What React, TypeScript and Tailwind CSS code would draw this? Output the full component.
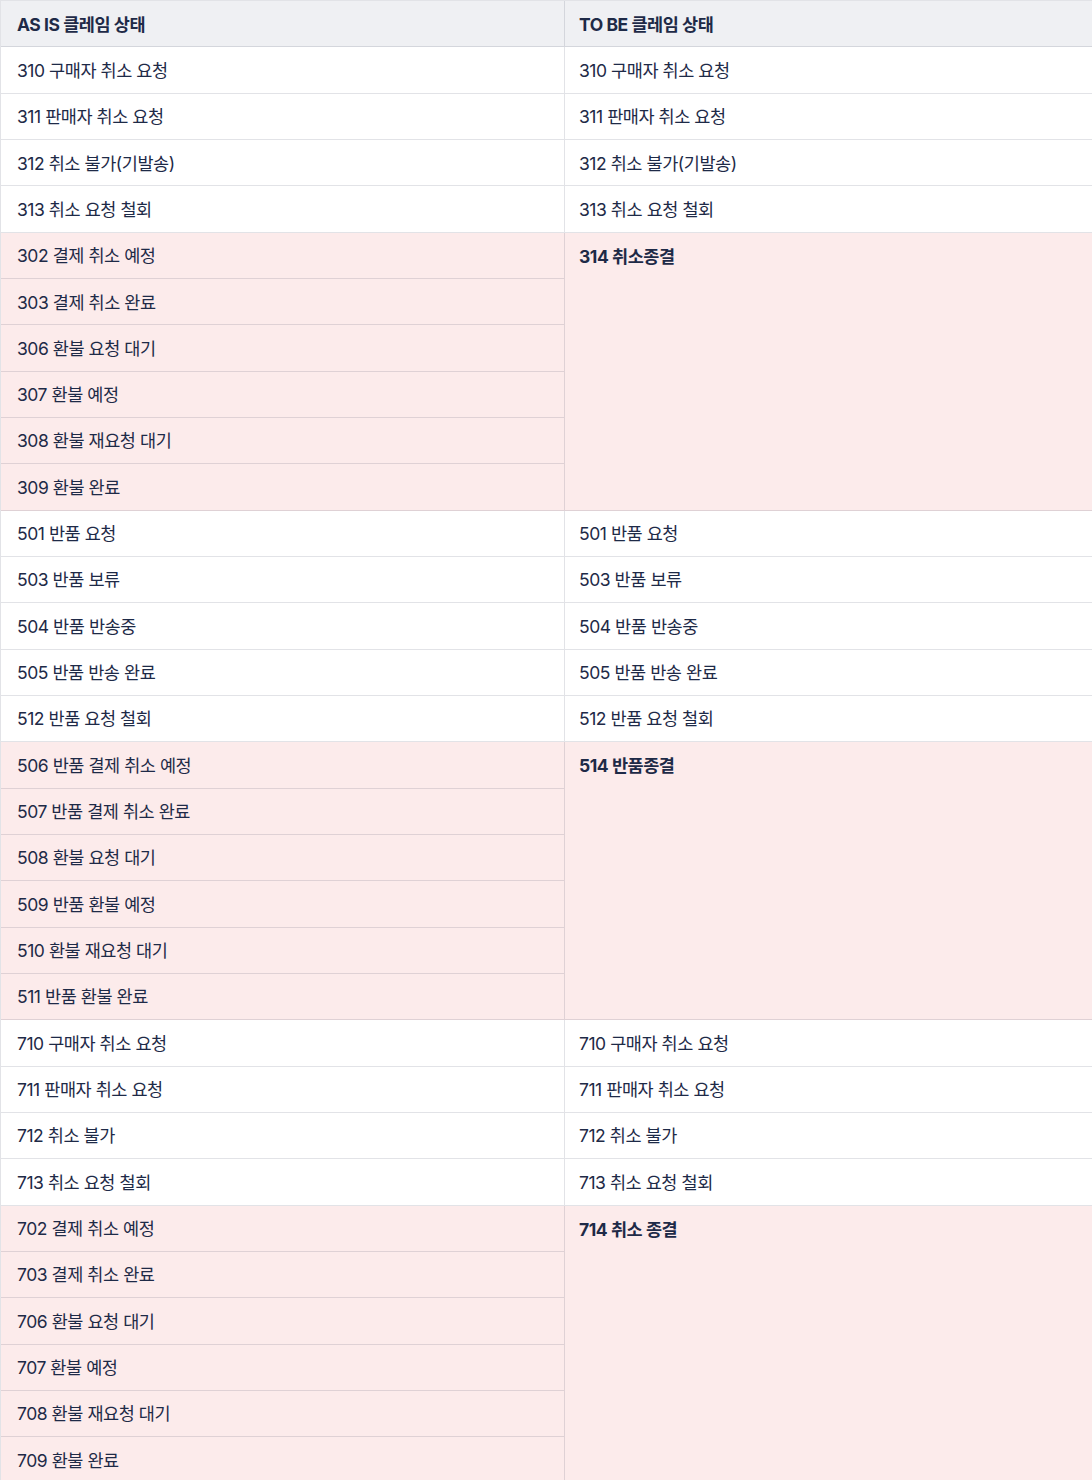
import React from 'react';

type Group = {
  asIs: string[];
  toBe: string[] | string;
};

// toBe as string = merged (closed) status, shown once across the group
const groups: Group[] = [
  {
    asIs: ['310 구매자 취소 요청', '311 판매자 취소 요청', '312 취소 불가(기발송)', '313 취소 요청 철회'],
    toBe: ['310 구매자 취소 요청', '311 판매자 취소 요청', '312 취소 불가(기발송)', '313 취소 요청 철회'],
  },
  {
    asIs: ['302 결제 취소 예정', '303 결제 취소 완료', '306 환불 요청 대기', '307 환불 예정', '308 환불 재요청 대기', '309 환불 완료'],
    toBe: '314 취소종결',
  },
  {
    asIs: ['501 반품 요청', '503 반품 보류', '504 반품 반송중', '505 반품 반송 완료', '512 반품 요청 철회'],
    toBe: ['501 반품 요청', '503 반품 보류', '504 반품 반송중', '505 반품 반송 완료', '512 반품 요청 철회'],
  },
  {
    asIs: ['506 반품 결제 취소 예정', '507 반품 결제 취소 완료', '508 환불 요청 대기', '509 반품 환불 예정', '510 환불 재요청 대기', '511 반품 환불 완료'],
    toBe: '514 반품종결',
  },
  {
    asIs: ['710 구매자 취소 요청', '711 판매자 취소 요청', '712 취소 불가', '713 취소 요청 철회'],
    toBe: ['710 구매자 취소 요청', '711 판매자 취소 요청', '712 취소 불가', '713 취소 요청 철회'],
  },
  {
    asIs: ['702 결제 취소 예정', '703 결제 취소 완료', '706 환불 요청 대기', '707 환불 예정', '708 환불 재요청 대기', '709 환불 완료'],
    toBe: '714 취소 종결',
  },
];

const cell = 'flex items-center pt-[2px] border-b border-[#1e2a47]/[0.13] h-[46.33px]';
const left = `${cell} pl-4 border-r`;
const right = `${cell} pl-[14px]`;

export default function App() {
  return (
    <div className="bg-white min-h-screen" style={{ fontFamily: 'Inter, "Noto Sans CJK KR", sans-serif' }}>
      <div className="grid grid-cols-[564px_1fr] border-l border-t border-[#1e2a47]/[0.13] text-[17.5px] text-[#1e2a47] tracking-[-0.45px]">
        {/* Header */}
        <div className={`${left} bg-[#eff0f3] font-bold`}>AS IS 클레임 상태</div>
        <div className={`${right} bg-[#eff0f3] font-bold`}>TO BE 클레임 상태</div>

        {groups.map((g, gi) => {
          if (typeof g.toBe === 'string') {
            return (
              <React.Fragment key={gi}>
                <div className="flex flex-col bg-[#fcebeb]">
                  {g.asIs.map((t) => (
                    <div key={t} className={left}>{t}</div>
                  ))}
                </div>
                <div className="bg-[#fcebeb] border-b border-[#1e2a47]/[0.13] pl-[14px]">
                  <div className="h-[46.33px] pt-[2px] flex items-center font-bold">{g.toBe}</div>
                </div>
              </React.Fragment>
            );
          }
          const toBe = g.toBe;
          return g.asIs.map((t, i) => (
            <React.Fragment key={`${gi}-${i}`}>
              <div className={left}>{t}</div>
              <div className={right}>{toBe[i]}</div>
            </React.Fragment>
          ));
        })}
      </div>
    </div>
  );
}
